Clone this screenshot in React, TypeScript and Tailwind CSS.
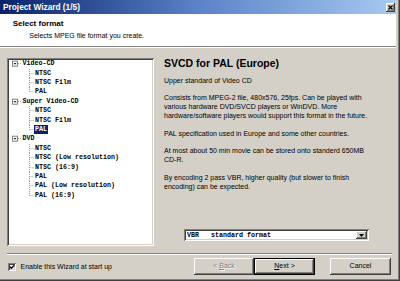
import React from "react";

const raised =
  "shadow-[inset_-1px_-1px_#404040,inset_1px_1px_#ffffff,inset_-2px_-2px_#808080,inset_2px_2px_#d4d0c8]";
const sunken =
  "shadow-[inset_1px_1px_#808080,inset_-1px_-1px_#ffffff,inset_2px_2px_#404040,inset_-2px_-2px_#d4d0c8]";

const tree = [
  { label: "Video-CD", children: ["NTSC", "NTSC Film", "PAL"] },
  { label: "Super Video-CD", children: ["NTSC", "NTSC Film", "PAL"], selected: 2 },
  {
    label: "DVD",
    children: [
      "NTSC",
      "NTSC (Low resolution)",
      "NTSC (16:9)",
      "PAL",
      "PAL (Low resolution)",
      "PAL (16:9)",
    ],
  },
];

const ROW = 9.4;

function RootRow({ label }: { label: string }) {
  return (
    <div className="flex items-center h-[9.4px]">
      <svg width="12.5" height={ROW} className="shrink-0">
        <rect x="3.5" y="2.2" width="5" height="5" fill="#fff" stroke="#808080" />
        <line x1="4.8" y1="4.7" x2="7.2" y2="4.7" stroke="#000" />
        <line x1="9" y1="4.7" x2="12.5" y2="4.7" stroke="#9a9a9a" strokeDasharray="1 1" />
      </svg>
      <span className="px-[1px]">{label}</span>
    </div>
  );
}

function ChildRow({ label, last, selected }: { label: string; last: boolean; selected: boolean }) {
  return (
    <div className="flex items-center h-[9.4px]">
      <svg width="25" height={ROW} className="shrink-0">
        <line x1="20.5" y1="0" x2="20.5" y2={last ? 4.7 : ROW} stroke="#9a9a9a" strokeDasharray="1 1" />
        <line x1="20.5" y1="4.7" x2="25" y2="4.7" stroke="#9a9a9a" strokeDasharray="1 1" />
      </svg>
      <span className={selected ? "px-[1px] bg-[#0a246a] text-white" : "px-[1px]"}>{label}</span>
    </div>
  );
}

function Button({
  children,
  disabled,
  isDefault,
  className,
}: {
  children: React.ReactNode;
  disabled?: boolean;
  isDefault?: boolean;
  className?: string;
}) {
  return (
    <div
      className={`h-[17px] bg-[#d4d0c8] flex items-center justify-center text-[7px] ${
        isDefault ? "border border-black" : ""
      } ${raised} ${disabled ? "text-[#808080] [text-shadow:1px_1px_0_#ffffff]" : "text-black"} ${className ?? ""}`}
    >
      {children}
    </div>
  );
}

export default function App() {
  return (
    <div className="w-[400px] h-[281px] bg-[#d4d0c8] overflow-hidden font-['Liberation_Sans',Arial,sans-serif] text-black">
      <div className="h-full border-r border-b border-[#404040]">
        <div className="h-full border-r border-b border-[#808080] pr-[2px] pb-[2px] flex flex-col">
          {/* title bar */}
          <div className="h-[14px] shrink-0 bg-linear-to-r from-[#0a246a] via-[#5c82c8] to-[#a6caf0] flex items-center pl-[3px] pr-[1px]">
            <span className="text-[8.3px] font-bold text-white leading-none">Project Wizard (1/5)</span>
            <div className={`ml-auto w-[9px] h-[9px] bg-[#d4d0c8] flex items-center justify-center ${raised}`}>
              <svg width="5" height="5" viewBox="0 0 5 5">
                <path d="M0.5 0.5 L4.5 4.5 M4.5 0.5 L0.5 4.5" stroke="#000" strokeWidth="1.3" />
              </svg>
            </div>
          </div>

          {/* header */}
          <div className="h-[32px] shrink-0 bg-white pt-[5px]">
            <div className="pl-[12.7px] text-[8px] font-bold leading-[10px]">Select format</div>
            <div className="pl-[29.3px] mt-[1.5px] text-[7px] leading-[9px]">
              Selects MPEG file format you create.
            </div>
          </div>
          <div className="h-px bg-[#808080] shrink-0" />
          <div className="h-px bg-white shrink-0" />

          {/* body */}
          <div className="flex pl-[7px] pt-[10px]">
            <div
              className={`w-[147px] h-[188px] bg-white ${sunken} pt-[1.3px] pl-[2px] font-['Liberation_Mono','Courier_New',monospace] font-bold text-[6.67px] leading-[9.4px]`}
            >
              {tree.map((node) => (
                <div key={node.label}>
                  <RootRow label={node.label} />
                  {node.children.map((c, i) => (
                    <ChildRow
                      key={c}
                      label={c}
                      last={i === node.children.length - 1}
                      selected={node.selected === i}
                    />
                  ))}
                </div>
              ))}
            </div>

            <div className="ml-[10px] w-[226px] h-[188px] flex flex-col">
              <div className="mt-[-1px] text-[10.5px] font-bold leading-[12px]">SVCD for PAL (Europe)</div>
              <div className="text-[7px] leading-[9px] whitespace-nowrap">
                <p className="mt-[6.5px]">Upper standard of Video CD</p>
                <p className="mt-[8.5px]">
                  Consists from MPEG-2 file, 480x576, 25fps. Can be played with
                  <br />
                  various hardware DVD/SVCD players or WinDVD. More
                  <br />
                  hardware/software players would support this format in the future.
                </p>
                <p className="mt-[8.5px]">PAL specification used in Europe and some other countries.</p>
                <p className="mt-[8.5px]">
                  At most about 50 min movie can be stored onto standerd 650MB
                  <br />
                  CD-R.
                </p>
                <p className="mt-[8.5px]">
                  By encoding 2 pass VBR, higher quality (but slower to finish
                  <br />
                  encoding) can be expected.
                </p>
              </div>

              <div
                className={`mt-auto mb-[5px] ml-[20px] w-[185px] h-[12px] bg-white ${sunken} flex items-center p-[2px]`}
              >
                <span className="pl-[1px] flex-1 whitespace-pre font-['Liberation_Mono','Courier_New',monospace] font-bold text-[6.67px] leading-[8px]">
                  {"VBR   standard format"}
                </span>
                <div className={`w-[11px] h-[8px] bg-[#d4d0c8] flex items-center justify-center ${raised}`}>
                  <svg width="5" height="3" viewBox="0 0 5 3">
                    <path d="M0 0 H5 L2.5 3 Z" fill="#000" />
                  </svg>
                </div>
              </div>
            </div>
          </div>

          {/* separator */}
          <div className="mt-[7px] mx-[7px] w-[385px] shrink-0">
            <div className="h-px bg-[#808080]" />
            <div className="h-px bg-white" />
          </div>

          {/* footer */}
          <div className="mt-[3px] flex items-center pl-[8px] pr-[5px]">
            <div className={`w-[8px] h-[8px] bg-white ${sunken} flex items-center justify-center`}>
              <svg width="6" height="6" viewBox="0 0 6 6">
                <path d="M0.8 2.6 L2.4 4.2 L5.3 1.2" stroke="#000" strokeWidth="1.3" fill="none" />
              </svg>
            </div>
            <span className="ml-[4.5px] text-[7px] leading-[9px]">Enable this Wizard at start up</span>

            <Button disabled className="ml-auto w-[60px]">
              &lt; <u className="ml-[2px]">B</u>ack
            </Button>
            <Button isDefault className="w-[61px]">
              <u>N</u>ext &gt;
            </Button>
            <Button className="ml-[15px] w-[61px]">Cancel</Button>
          </div>
        </div>
      </div>
    </div>
  );
}
